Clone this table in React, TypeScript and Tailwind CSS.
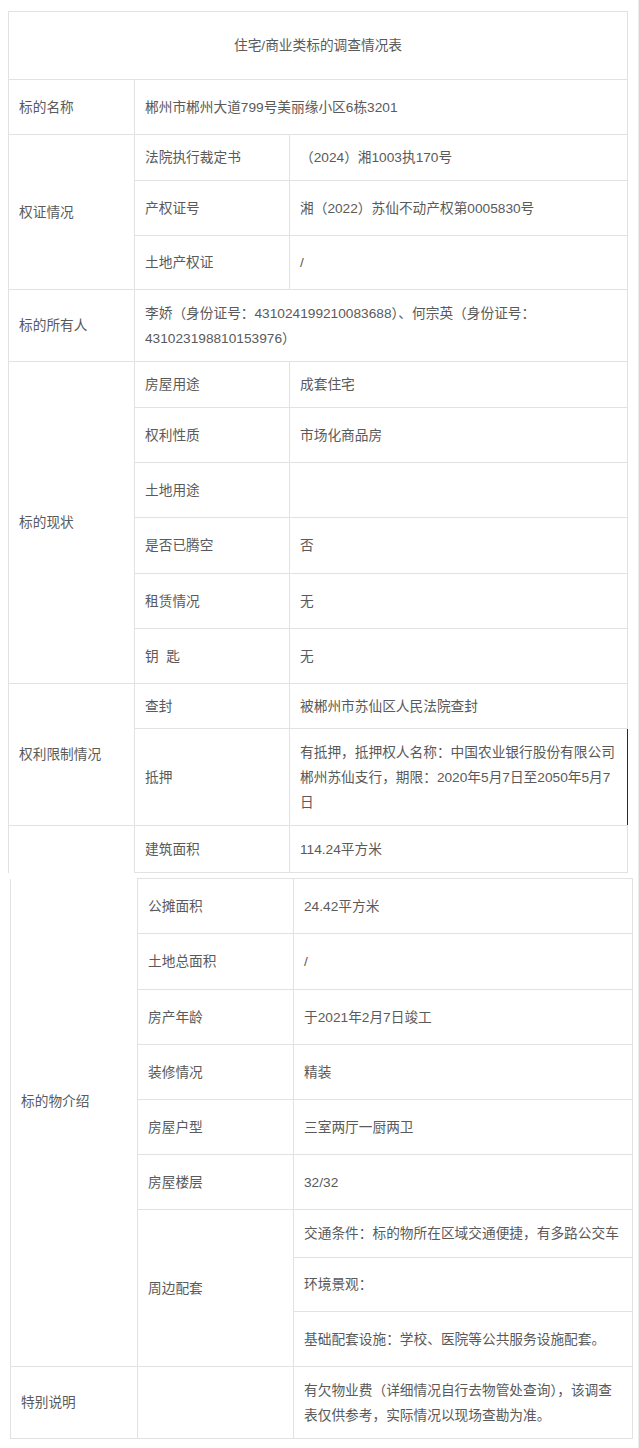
import type { ReactNode } from 'react';
import clsx from 'clsx';

type CellProps = {
  children?: ReactNode;
  className?: string;
  rowSpan?: number;
  colSpan?: number;
};

function Cell({ children, className, rowSpan, colSpan }: CellProps) {
  return (
    <td
      rowSpan={rowSpan}
      colSpan={colSpan}
      className={clsx('border border-[#e2e2e2] px-[10px] py-0 align-middle', className)}
    >
      {children}
    </td>
  );
}

function Lines({ lines }: { lines: string[] }) {
  return (
    <div className="flex flex-col">
      {lines.map((l) => (
        <span key={l} className="whitespace-nowrap">
          {l}
        </span>
      ))}
    </div>
  );
}

export default function App() {
  return (
    <div className="w-[639px] min-h-[1448px] bg-white border-r border-[#ececec] pt-[11px] font-['Liberation_Sans','Noto_Sans_CJK_SC',sans-serif] text-[13.7px] leading-[25px] text-[#5a5a5a]">
      <table className="ml-[8px] w-[620px] table-fixed border-collapse">
        <colgroup>
          <col className="w-[126px]" />
          <col className="w-[155px]" />
          <col />
        </colgroup>
        <tbody>
          <tr className="h-[68px]">
            <Cell colSpan={3} className="text-center">
              住宅/商业类标的调查情况表
            </Cell>
          </tr>
          <tr className="h-[55px]">
            <Cell>标的名称</Cell>
            <Cell colSpan={2}>郴州市郴州大道799号美丽缘小区6栋3201</Cell>
          </tr>
          <tr className="h-[46px]">
            <Cell rowSpan={3}>权证情况</Cell>
            <Cell>法院执行裁定书</Cell>
            <Cell>（2024）湘1003执170号</Cell>
          </tr>
          <tr className="h-[55px]">
            <Cell>产权证号</Cell>
            <Cell>湘（2022）苏仙不动产权第0005830号</Cell>
          </tr>
          <tr className="h-[54px]">
            <Cell>土地产权证</Cell>
            <Cell>/</Cell>
          </tr>
          <tr className="h-[72px]">
            <Cell>标的所有人</Cell>
            <Cell colSpan={2}>
              <Lines
                lines={[
                  '李娇（身份证号：431024199210083688）、何宗英（身份证号：',
                  '431023198810153976）',
                ]}
              />
            </Cell>
          </tr>
          <tr className="h-[46px]">
            <Cell rowSpan={6}>标的现状</Cell>
            <Cell>房屋用途</Cell>
            <Cell>成套住宅</Cell>
          </tr>
          <tr className="h-[55px]">
            <Cell>权利性质</Cell>
            <Cell>市场化商品房</Cell>
          </tr>
          <tr className="h-[55px]">
            <Cell>土地用途</Cell>
            <Cell />
          </tr>
          <tr className="h-[56px]">
            <Cell>是否已腾空</Cell>
            <Cell>否</Cell>
          </tr>
          <tr className="h-[55px]">
            <Cell>租赁情况</Cell>
            <Cell>无</Cell>
          </tr>
          <tr className="h-[55px]">
            <Cell className="whitespace-pre">钥  匙</Cell>
            <Cell>无</Cell>
          </tr>
          <tr className="h-[45px]">
            <Cell rowSpan={2}>权利限制情况</Cell>
            <Cell>查封</Cell>
            <Cell>被郴州市苏仙区人民法院查封</Cell>
          </tr>
          <tr className="h-[97px]">
            <Cell>抵押</Cell>
            <Cell className="border-r-[#2a2a2a]">
              <Lines
                lines={[
                  '有抵押，抵押权人名称：中国农业银行股份有限公司',
                  '郴州苏仙支行，期限：2020年5月7日至2050年5月7',
                  '日',
                ]}
              />
            </Cell>
          </tr>
          <tr className="h-[47px]">
            <Cell className="border-b-0" />
            <Cell>建筑面积</Cell>
            <Cell>114.24平方米</Cell>
          </tr>
        </tbody>
      </table>

      <table className="ml-[10px] mt-[5px] w-[623px] table-fixed border-collapse">
        <colgroup>
          <col className="w-[127px]" />
          <col className="w-[156px]" />
          <col />
        </colgroup>
        <tbody>
          <tr className="h-[55px]">
            <Cell rowSpan={9} className="border-t-0 pb-[42px]">
              标的物介绍
            </Cell>
            <Cell>公摊面积</Cell>
            <Cell>24.42平方米</Cell>
          </tr>
          <tr className="h-[56px]">
            <Cell>土地总面积</Cell>
            <Cell>/</Cell>
          </tr>
          <tr className="h-[55px]">
            <Cell>房产年龄</Cell>
            <Cell>于2021年2月7日竣工</Cell>
          </tr>
          <tr className="h-[55px]">
            <Cell>装修情况</Cell>
            <Cell>精装</Cell>
          </tr>
          <tr className="h-[55px]">
            <Cell>房屋户型</Cell>
            <Cell>三室两厅一厨两卫</Cell>
          </tr>
          <tr className="h-[55px]">
            <Cell>房屋楼层</Cell>
            <Cell>32/32</Cell>
          </tr>
          <tr className="h-[48px]">
            <Cell rowSpan={3}>周边配套</Cell>
            <Cell>交通条件：标的物所在区域交通便捷，有多路公交车</Cell>
          </tr>
          <tr className="h-[54px]">
            <Cell>环境景观：</Cell>
          </tr>
          <tr className="h-[55px]">
            <Cell>基础配套设施：学校、医院等公共服务设施配套。</Cell>
          </tr>
          <tr className="h-[72px]">
            <Cell>特别说明</Cell>
            <Cell />
            <Cell>
              <Lines
                lines={[
                  '有欠物业费（详细情况自行去物管处查询），该调查',
                  '表仅供参考，实际情况以现场查勘为准。',
                ]}
              />
            </Cell>
          </tr>
        </tbody>
      </table>
      <div className="mt-[10px] border-b border-[#ececec]" />
    </div>
  );
}
